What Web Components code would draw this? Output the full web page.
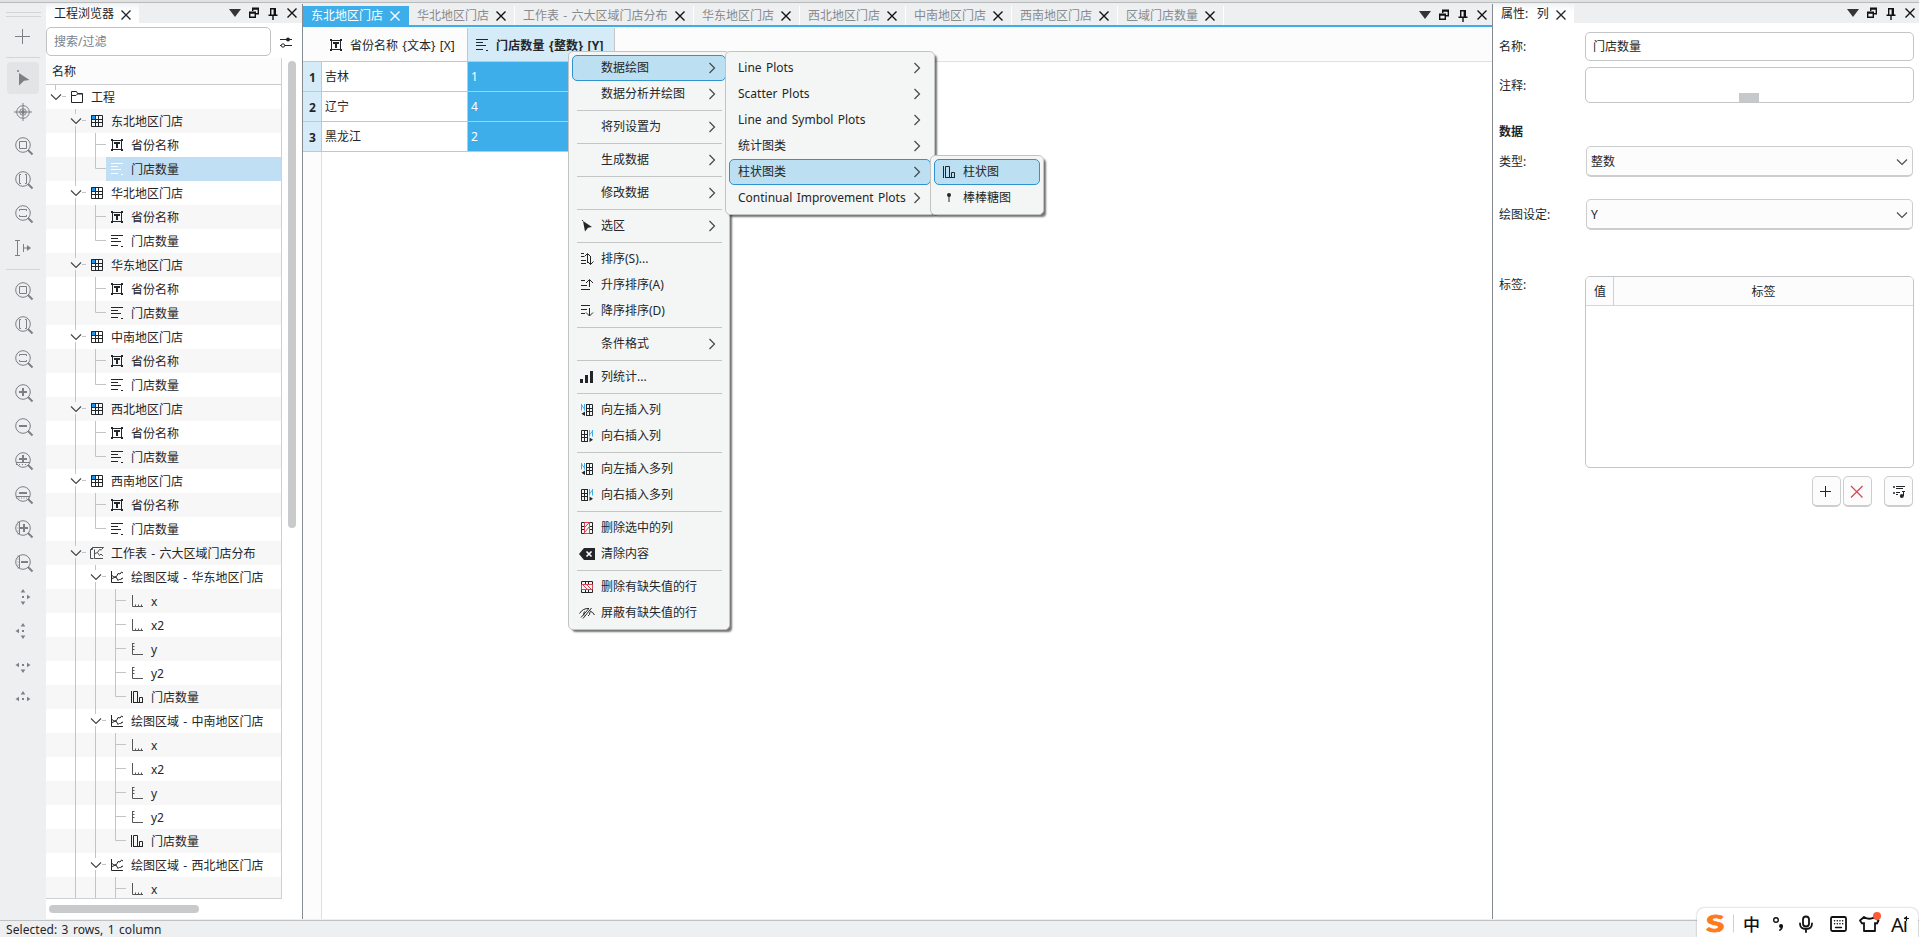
<!DOCTYPE html>
<html lang="zh-CN">
<head>
<meta charset="utf-8">
<title>工程浏览器</title>
<style>
    html, body { margin: 0; height: 100%; overflow: hidden; }
    body {
        --ink: #232629;
        --line: #c4c6c8;
        --chrome: #eeeff1;
        --accent: #3daee9;
        --soft: #d6ebf8;
        font: 12px/16px "Noto Sans", "Noto Sans CJK SC", sans-serif;
        word-spacing: 1.2px;
        color: var(--ink);
        background: #fff;
    }
</style>
</head>
<body>
<main-window></main-window>

<script>
const ICONS = {
    // window controls
    close: '<path d="M3.5 3.5l9 9M12.5 3.5l-9 9" stroke-width="1.4"/>',
    menu: '<path d="M2 4h12l-6 8z" fill="#333537" stroke="none"/>',
    restore: '<path d="M6.7 6V3.7h5.6v5H10M3.7 7.7h5.6v4.6H3.7z" stroke-width="1.4"/><path d="M6 3.6h7M3 7.6h7" stroke-width="2"/>',
    pin: '<path d="M5.7 10V3.7h4.6V10M9.3 4v6M3.5 10.2h9M8 10.5V15" stroke-width="1.4"/>',
    filter: '<path d="M2 5.5h12M2 11.5h12"/><circle cx="10" cy="5.5" r="2" fill="currentColor" stroke="none"/><circle cx="5" cy="11.5" r="1.7" fill="#fff"/>',
    // tree and columns
    folder: '<path d="M2.5 13.5v-11h5l1 2h5v9z"/><path d="M2.5 6.5h4.500l2-2M8.500 5h5"/>',
    sheet: '<path d="M2 2h4.500v4.500H2z" fill="#1d99f3" stroke="none"/><path d="M2.5 2.5h11v11h-11zM6.5 2v12M9.500 2v12M2 6.5h12M2 9.500h12"/>',
    text: '<path d="M3.5 3.5h9v9h-9z"/><path d="M2 2h2v2H2zM12 2h2v2h-2zM2 12h2v2H2zM12 12h2v2h-2z" fill="currentColor" stroke="none"/><path d="M5 6h6M8 6v5" stroke-width="2"/>',
    number: '<path d="M2 2.500h12M2 5.500h7M2 8.500h10M2 12.500h7M12 13.500h2"/>',
    worksheet: '<path d="M1.500 13.500V4.500l2-2h11l-2 2M1.500 13.500h3M5.500 4.500v9H14M6 8.500l2.500-1 2-3 2 .5M8.500 7.500l2 3 1.500-1.500 2 2M3.500 2.500v2h-2" stroke="#4d5053"/>',
    area: '<path d="M2.500 2v11.500H14M3 6.500l2 1.500 2.500-.5L9 4.500l2 .5 1.500-2 1.500 1M7 8l2 3.500 1.500-1.500 1 1 1.500-2 1 .5M3 9.500l4-1.500"/>',
    xaxis: '<path d="M3.500 2v11.500H14M6.500 11.500v2M9.500 11.500v2M12.500 11.500v2" stroke="#55585b"/>',
    yaxis: '<path d="M3.500 2v11.500H14M3.500 2.500h2M3.500 5.500h2M3.500 8.500h2" stroke="#55585b"/>',
    bars: '<path d="M2.500 2v12M4.500 2.500h4v11h-4zM10.500 8.500h3v5h-3zM4 13.500h10"/>',
    // context menu
    cursor: '<path d="M4 3l9 6-4 .7L6 13.500z" fill="currentColor" stroke="none"/><path d="M3 2.500h1"/>',
    lollipop: '<circle cx="8" cy="5" r="2" fill="currentColor" stroke="none"/><path d="M8 5v7"/>',
    sort: '<path d="M2 2.500h3M2 5.500h3M2 9.500h5M2 12.500h5M8.500 12V3M5.500 5.500l3-3 3 3M11.500 5v8.500M8.500 10.500l3 3 3-3"/>',
    sortUp: '<path d="M2 3.500h4M2 8.500h6M2 12.500h9M10.500 10V3M7 6l3.500-3.500L14 6"/>',
    sortDown: '<path d="M2 2.500h9M2 6.500h6M2 10.500h4M10.500 5v8M7 9.500l3.500 3.500L14 9.500"/>',
    stats: '<path d="M2.500 10v4M7.500 6v8M12.500 2v12" stroke-width="3"/>',
    insLeft: '<path d="M7.500 2.500h6v11h-6M7.500 2v12M10.500 2v12M7 6.500h7M7 9.500h7"/><path d="M2.500 2v6.500M5.500 2v6.500M2.500 3l3 4" stroke="#3daee9"/><path d="M6 9.500V14l-3.500-2.200z" fill="currentColor" stroke="none"/>',
    insRight: '<path d="M8.500 2.500h-6v11h6M8.500 2v12M5.500 2v12M2 6.500h7M2 9.500h7"/><path d="M10.500 2v6.500M13.500 2v6.500M10.500 7l3-4" stroke="#3daee9"/><path d="M10.500 9.500V14l3.500-2.200z" fill="currentColor" stroke="none"/>',
    delCol: '<path d="M2.500 2.500h11v11h-11zM2 6.500h3M2 9.500h3M11 6.500h3M11 9.500h3"/><path d="M5.500 2.500h5v11h-5zM6 7l4-4M6 12l4-5" stroke="#da4453"/>',
    delRow: '<path d="M2.500 2.500h11v11h-11zM6.500 2v3M9.500 2v3M6.500 11v3M9.500 11v3"/><path d="M2.500 5.500h11v5h-11zM4 6l4 4M8 6l4 4" stroke="#da4453"/>',
    clear: '<path d="M0 8l5-6h11v12H5z" fill="currentColor" stroke="none"/><path d="M7.500 5.500l5 5M12.500 5.500l-5 5" stroke="#fff" stroke-width="1.600"/>',
    mask: '<path d="M.5 8.500Q4 3 10 3.500M11 6q3 1 4.500 4M4 13.500L12.500 3M2 12.500L9.500 4M5.500 6.500Q4 9 5 10.500M9 11q2-1 2-4"/>',
    // buttons
    plus: '<path d="M7.500 2v11M2 7.500h11" />',
    remove: '<path d="M2 2l11.500 11.500M13.500 2L2 13.500" stroke="#da4453" stroke-width="1.200"/>',
    playlist: '<path d="M5 2.500h9M5 4.500h7M5 8.500h4M5 10.500h2M12.500 7v5M11 7.500h3"/><path d="M2 2h2v2H2zM2 8h2v2H2z" fill="#55585b" stroke="none"/><circle cx="10.800" cy="12" r="2" fill="currentColor" stroke="none"/>',
    down: '<path d="M3 5.500l5 5 5-5" stroke="#4b4e51" stroke-width="1.200"/>'
};

// the toolbar set is drawn on a 22px grid
const LENS = '<circle cx="11" cy="10" r="7.300"/><path d="M16 15l4.500 4.500" stroke-width="2"/>';
const DOT = {
    up: '<path d="M11 3l2.300 3.500H8.700z"/>',
    down: '<path d="M11 19l2.300-3.500H8.700z"/>',
    left: '<path d="M3.500 11L7 8.700v4.600z"/>',
    right: '<path d="M18.500 11L15 8.700v4.600z"/>'
};
const dots = (...dirs) => `<g fill="currentColor" stroke="none">${dirs.map(d => DOT[d]).join("")}<path d="M10 10h2v2h-2z"/></g>`;
const TOOLS = {
    add: '<path d="M10.500 3v15M3 10.500h15"/>',
    pointer: '<path d="M7 6l10.500 7-5.500.8L7 18.500z" fill="currentColor" stroke="none"/><path d="M5 4h2" stroke-width="1.500"/>',
    target: '<circle cx="11" cy="11" r="6.300"/><circle cx="11" cy="11" r="3.300"/><path d="M11 2v18M2 11h18"/><circle cx="11" cy="11" r="1.500" fill="currentColor"/>',
    fit: LENS + '<path d="M7.500 6.500h7v7h-7z"/>',
    fitX: LENS + '<path d="M9 5.500H7.500v9H9M13 5.500h1.500v9H13"/>',
    fitY: LENS + '<path d="M7.500 8V6.500h7V8M7.500 12v1.500h7V12"/>',
    range: '<path d="M3 3.500h5M3 18.500h5M5.500 3.500v15M11.500 7v8M12 11h6"/><path d="M19 11l-4-3v6z" fill="currentColor" stroke="none"/>',
    zoomIn: LENS + '<path d="M11 6v8M7 10h8" stroke-width="2"/>',
    zoomOut: LENS + '<path d="M7 10h8" stroke-width="2"/>',
    zoomInX: LENS + '<path d="M11 5v7M7 9h8" stroke-width="2"/><path d="M4 12.500h14"/><path d="M4 14.500h14" stroke-dasharray="1 2"/>',
    zoomOutX: LENS + '<path d="M7 9h8" stroke-width="2"/><path d="M4 12.500h14"/><path d="M4 14h14" stroke-dasharray="1 1.500"/>',
    zoomInY: LENS + '<path d="M12 6v8M8 10h8" stroke-width="2"/><path d="M7.500 3.500v13"/><path d="M6 3.500v13" stroke-dasharray="1 2"/>',
    zoomOutY: LENS + '<path d="M9 10h7" stroke-width="2"/><path d="M7.500 3.500v13"/><path d="M6 3.500v13" stroke-dasharray="1 2"/>',
    shiftRight: dots("up", "down", "right"),
    shiftLeft: dots("up", "down", "left"),
    shiftDown: dots("left", "right", "down"),
    shiftUp: dots("left", "right", "up")
};

class BaseElement extends HTMLElement {
    constructor() {
        super();
        this.attachShadow({ mode: "open" });
    }

    connectedCallback() {
        const template = document.createElement("template");
        template.innerHTML = `<style>${this.getStyles()}</style>${this.getTemplate()}`;
        this.shadowRoot.replaceChildren(template.content.cloneNode(true));
    }
}

class UiIcon extends BaseElement {
    getTemplate() {
        const name = this.getAttribute("name");
        const size = TOOLS[name] ? 22 : 16;
        return `<svg width="${size}" height="${size}" viewBox="0 0 ${size} ${size}" fill="none" stroke="currentColor">${TOOLS[name] || ICONS[name]}</svg>`;
    }
    getStyles() {
        return `:host { display: block; flex: none; } svg { display: block; }`;
    }
}
customElements.define("ui-icon", UiIcon);

class WindowControls extends BaseElement {
    getTemplate() {
        return ["menu", "restore", "pin", "close"].map(n => `<ui-icon name="${n}"></ui-icon>`).join("");
    }
    getStyles() {
        return `:host { display: flex; gap: 3px; margin-left: auto; color: #111; }`;
    }
}
customElements.define("window-controls", WindowControls);

class DockTitle extends BaseElement {
    getTemplate() {
        return `
            <div class="tab"><span><slot></slot></span><ui-icon name="close"></ui-icon></div>
            <window-controls></window-controls>
        `;
    }
    getStyles() {
        return `
            :host { display: flex; flex: none; height: 19px; background: var(--chrome); padding-right: var(--title-end, 2px); }
            .tab {
                display: flex; align-items: center; gap: 4px; box-sizing: border-box;
                padding: 1px 5px 0 8px;
                background: linear-gradient(#f3f4f5, #fff 8px);
            }
            .tab ui-icon { margin-bottom: -1px; }
            window-controls { margin-top: 1px; }
        `;
    }
}
customElements.define("dock-title", DockTitle);

class ToolStrip extends BaseElement {
    getTemplate() {
        const groups = [
            ["add"],
            ["pointer", "target", "fit", "fitX", "fitY", "range"],
            ["fit", "fitX", "fitY", "zoomIn", "zoomOut", "zoomInX", "zoomOutX", "zoomInY", "zoomOutY",
             "shiftRight", "shiftLeft", "shiftDown", "shiftUp"]
        ];
        return `<div class="grip"></div>` + groups.map(group =>
            `<div class="group">${group.map(n => `<div class="tool ${n}"><ui-icon name="${n}"></ui-icon></div>`).join("")}</div>`
        ).join("<hr>");
    }
    getStyles() {
        return `
            :host { display: flex; flex-direction: column; flex: none; width: 46px; background: var(--chrome); color: #7d8083; }
            .grip { flex: none; height: 3px; margin: 8px 5px 0 6px; border: solid #d3d5d7; border-width: 1px 0; }
            .group { padding: 4px 0 0 7px; }
            .group:last-child { padding-top: 5px; }
            .tool { width: 32px; height: 32px; margin-bottom: 2px; display: grid; place-items: center; border-radius: 4px; }
            .add { margin-bottom: 1px; }
            .pointer { background: #e3e4e6; }
            hr { flex: none; width: 34px; height: 1px; border: 0; margin: 3px 0 0 6px; background: #d3d5d7; }
        `;
    }
}
customElements.define("tool-strip", ToolStrip);

class TreeRow extends BaseElement {
    // one guide cell per level: "." empty, "|" line, "+" tee, "L" end, "v" open node, "V" open root
    guide(kind) {
        const part = {
            ".": "",
            "|": "M9.500 0v24",
            "+": "M9.500 0v24M10 11.500h10",
            "L": "M9.500 0v11.500H20",
            "v": "M9.500 0v5M9.500 17v7M16 11.500h4",
            "V": "M9.500 0v5M16 11.500h4"
        }[kind];
        const arrow = kind.toLowerCase() == "v" ? '<path d="M5 9.500l5 5 5-5" stroke="#45484b" stroke-width="1.200"/>' : "";
        return `<svg width="20" height="24" fill="none" stroke="#c3c4c5"><path d="${part}"/>${arrow}</svg>`;
    }
    getTemplate() {
        return `
            ${[...this.getAttribute("guides")].map(g => this.guide(g)).join("")}
            <div class="cell"><ui-icon name="${this.getAttribute("icon")}"></ui-icon><span><slot></slot></span></div>
        `;
    }
    getStyles() {
        return `
            :host { display: flex; flex: none; height: 24px; white-space: nowrap; }
            :host(:nth-child(even)) { background: #f7f7f7; }
            :host([selected]) .cell { background: #c1dff4; }
            :host([selected]) ui-icon { color: #fff; }
            svg { flex: none; }
            .cell { flex: 1; display: flex; align-items: center; gap: 6px; padding-left: 3px; }
            span { padding-top: 2px; }
        `;
    }
}
customElements.define("tree-row", TreeRow);

class ProjectTree extends BaseElement {
    rows() {
        const out = [["V", "folder", "工程"]];
        ["东北", "华北", "华东", "中南", "西北", "西南"].forEach((area, i) => {
            out.push([".v", "sheet", area + "地区门店"]);
            out.push([".|+", "text", "省份名称"]);
            out.push([".|L", "number", "门店数量", i == 0]);
        });
        out.push([".v", "worksheet", "工作表 - 六大区域门店分布"]);
        ["华东", "中南", "西北"].forEach(area => {
            out.push([".|v", "area", `绘图区域 - ${area}地区门店`]);
            out.push([".||+", "xaxis", "x"], [".||+", "xaxis", "x2"], [".||+", "yaxis", "y"], [".||+", "yaxis", "y2"]);
            out.push([".||L", "bars", "门店数量"]);
        });
        return out.slice(0, 34);
    }
    getTemplate() {
        return `
            <dock-title>工程浏览器</dock-title>
            <div class="search"><div class="field">搜索/过滤</div><ui-icon name="filter"></ui-icon></div>
            <div class="body">
                <div class="view">
                    <div class="head">名称</div>
                    <div class="rows">${this.rows().map(([g, icon, label, sel]) =>
                        `<tree-row guides="${g}" icon="${icon}" ${sel ? "selected" : ""}>${label}</tree-row>`).join("")}</div>
                </div>
                <div class="vbar"></div>
            </div>
            <div class="hbar"></div>
        `;
    }
    getStyles() {
        return `
            :host { display: flex; flex-direction: column; flex: none; width: 256px; background: #fff; }
            .search { display: flex; align-items: center; gap: 7px; padding: 4px 0 2px; }
            .field {
                box-sizing: border-box; width: 225px; height: 29px; padding: 6px 7px;
                border: 1px solid #c0c2c4; border-radius: 5px; color: #75828e;
            }
            .body { display: flex; flex: none; height: 841px; }
            .view { display: flex; flex-direction: column; box-sizing: border-box; width: 236px; border: solid #cfd0d1; border-width: 0 1px 1px 0; }
            .head { flex: none; box-sizing: border-box; height: 27px; padding: 6px 6px 0; background: #fcfcfc; border-bottom: 1px solid #c9cacb; }
            .rows { display: flex; flex-direction: column; flex: 1; overflow: hidden; }
            .vbar { width: 8px; height: 467px; margin: 3px 0 0 6px; border-radius: 4px; background: #c9cacb; }
            .hbar { width: 150px; height: 8px; margin: 6px 0 0 3px; border-radius: 4px; background: #c9cacb; }
        `;
    }
}
customElements.define("project-tree", ProjectTree);

class SheetTabs extends BaseElement {
    getTemplate() {
        const tabs = ["东北地区门店", "华北地区门店", "工作表 - 六大区域门店分布", "华东地区门店",
                      "西北地区门店", "中南地区门店", "西南地区门店", "区域门店数量"];
        return tabs.map((t, i) =>
            `<div class="tab ${i ? "" : "active"}"><span>${t}</span><ui-icon name="close"></ui-icon></div>`
        ).join("") + "<window-controls></window-controls>";
    }
    getStyles() {
        return `
            :host { display: flex; flex: none; height: 19px; padding: 0 2px 0 0; margin-top: 2px; background: var(--chrome); border-bottom: 2px solid var(--accent); }
            .tab {
                display: flex; justify-content: space-between; align-items: center; box-sizing: border-box;
                width: 106px; padding: 1px 5px 0 8px; border-right: 1px solid #fff; color: #878a8d; white-space: nowrap;
            }
            .tab:nth-of-type(3) { width: 179px; }
            .tab ui-icon { color: #111; }
            .active, .active ui-icon { color: #fff; }
            .active { background: var(--accent); border-color: var(--accent); }
            window-controls { margin-top: 1px; }
        `;
    }
}
customElements.define("sheet-tabs", SheetTabs);

class DataSheet extends BaseElement {
    getTemplate() {
        const rows = [["吉林", 1], ["辽宁", 4], ["黑龙江", 2]];
        return `
            <div class="head">
                <div class="first"><ui-icon name="text"></ui-icon><span>省份名称 {文本} [X]</span></div>
                <div class="picked"><ui-icon name="number"></ui-icon><span>门店数量 {整数} [Y]</span></div>
            </div>
            ${rows.map(([name, count], i) => `<div class="row"><b>${i + 1}</b><span>${name}</span><span class="on">${count}</span></div>`).join("")}
            <div class="rest"></div>
        `;
    }
    getStyles() {
        return `
            :host { display: flex; flex-direction: column; flex: 1; background: #fff; }
            .head { display: flex; flex: none; box-sizing: border-box; height: 35px; padding: 1px 0 0; background: #fcfcfc; border-bottom: 1px solid #dfe0e1; }
            .head div { display: flex; align-items: center; gap: 6px; box-sizing: border-box; white-space: nowrap; border-right: 1px solid var(--line); border-bottom: 1px solid var(--line); margin-bottom: -1px; }
            .head span { padding-top: 2px; }
            .head .first { width: 165px; padding-left: 25px; }
            .head .picked { width: 147px; padding-left: 6px; font-weight: bold; letter-spacing: .15px; background: var(--soft); }
            .row { display: flex; height: 30px; }
            .row > * { box-sizing: border-box; padding: 7px 3px 0; border-right: 1px solid var(--line); border-bottom: 1px solid var(--line); }
            .row b { width: 19px; padding: 8px 0 0 6px; background: var(--soft); }
            .row span { width: 146px; }
            .row .on { width: 147px; background: var(--accent); color: #fff; }
            .rest { flex: 1; box-sizing: border-box; width: 19px; background: #fcfcfc; border-right: 1px solid #dfe0e1; }
        `;
    }
}
customElements.define("data-sheet", DataSheet);

class PopupMenu extends BaseElement {
    getTemplate() {
        return `<slot></slot>`;
    }
    getStyles() {
        return `
            :host {
                position: absolute; box-sizing: border-box; padding: 3px;
                background: #f4f6f5; border: 1px solid #c2c4c4; border-radius: 5px;
                box-shadow: 3px 3px 2px -1px rgba(0, 0, 0, .55);
            }
        `;
    }
}
customElements.define("popup-menu", PopupMenu);

class MenuEntry extends BaseElement {
    getTemplate() {
        const icon = this.getAttribute("icon");
        return `
            <div class="icon">${icon ? `<ui-icon name="${icon}"></ui-icon>` : ""}</div>
            <span><slot></slot></span>
            ${this.hasAttribute("more") ? '<svg width="8" height="12" fill="none" stroke="#45484b" stroke-width="1.200"><path d="M1.500 1l5 5-5 5"/></svg>' : ""}
        `;
    }
    getStyles() {
        return `
            :host { display: flex; align-items: center; box-sizing: border-box; height: 26px; padding: 0 9px 0 6px; border: 1px solid transparent; border-radius: 5px; white-space: nowrap; }
            :host([on]) { background: #bcdff2; border-color: #2f93cf; }
            .icon { width: 22px; }
            :host([plain]) .icon { width: 2px; }
            svg { margin-left: auto; }
        `;
    }
}
customElements.define("menu-entry", MenuEntry);

class MenuRule extends BaseElement {
    getTemplate() { return `<hr>`; }
    getStyles() {
        return `
            :host { display: block; padding: 3px 4px 3px 5px; }
            hr { height: 1px; margin: 0; border: 0; background: #c4c6c6; }
        `;
    }
}
customElements.define("menu-rule", MenuRule);

class ColumnProperties extends BaseElement {
    getTemplate() {
        return `
            <dock-title>属性: &nbsp;列</dock-title>
            <div class="form">
                <label>名称:</label><div class="input">门店数量</div>
                <label>注释:</label><div class="input note"><i></i></div>
                <label class="section">数据</label>
                <label>类型:</label><div class="combo">整数<ui-icon name="down"></ui-icon></div>
                <label>绘图设定:</label><div class="combo">Y<ui-icon name="down"></ui-icon></div>
                <label class="top">标签:</label>
                <div class="table"><div class="th"><span>值</span><span>标签</span></div></div>
            </div>
            <div class="buttons">
                <div><ui-icon name="plus"></ui-icon></div>
                <div><ui-icon name="remove"></ui-icon></div>
                <div><ui-icon name="playlist"></ui-icon></div>
            </div>
        `;
    }
    getStyles() {
        return `
            :host { display: flex; flex-direction: column; flex: none; width: 426px; background: #fff; --title-end: 1px; }
            .form {
                display: grid; grid-template-columns: 80px 329px; column-gap: 6px; align-items: center;
                grid-template-rows: 29px 6px 36px 17px 23px 3px 31px 22px 31px 46px 192px;
                padding: 9px 5px 0 6px;
            }
            .form > * { box-sizing: border-box; }
            label:nth-of-type(1), .input { grid-row: 1; }
            label:nth-of-type(2), .note { grid-row: 3; }
            label { padding-top: 1px; }
            .section { grid-row: 5; font-weight: bold; }
            label:nth-of-type(4) { grid-row: 7; }
            label:nth-of-type(5) { grid-row: 9; }
            .combo { grid-row: 7; grid-column: 2; }
            .combo + label + .combo { grid-row: 9; }
            .top { grid-row: 11; align-self: start; }
            .table { grid-row: 11; grid-column: 2; }
            .input { grid-column: 2; height: 100%; padding: 6px 7px; border: 1px solid #c3c5c6; border-radius: 5px; }
            .input.note { grid-row: 3; display: flex; justify-content: center; align-items: flex-end; padding: 0; }
            .note i { width: 20px; height: 9px; margin-right: 1px; background: #c6c8ca; }
            .combo {
                display: flex; align-items: center; justify-content: space-between; height: 100%; margin: 0 1px;
                padding: 1px 2px 0 4px; background: #fcfcfc; border: 1px solid #cbcdce; border-bottom: 2px solid #cbcdce; border-radius: 5px;
            }
            .table { height: 100%; border: 1px solid #c3c5c6; border-radius: 5px; overflow: hidden; }
            .th { display: flex; height: 28px; line-height: 30px; text-align: center; background: #fcfcfc; border-bottom: 1px solid #d5d6d7; }
            .th span:first-child { width: 28px; padding-left: 1px; box-sizing: border-box; border-right: 1px solid #cfd0d1; }
            .th span:last-child { flex: 1; }
            .buttons { display: flex; justify-content: flex-end; gap: 2px; padding: 8px 6px 0 0; }
            .buttons div {
                display: flex; box-sizing: border-box; width: 29px; height: 31px; padding: 7px 0 0 5px;
                background: #fcfcfc; border: 1px solid #cbcdce; border-bottom-width: 2px; border-radius: 5px;
            }
            .buttons div:last-child { margin-left: 10px; padding-left: 6px; }
        `;
    }
}
customElements.define("column-properties", ColumnProperties);

class InputBar extends BaseElement {
    getTemplate() {
        return `
            <svg width="222" height="32" fill="none" stroke="#111" stroke-width="1.800" stroke-linecap="round" stroke-linejoin="round">
                <text x="6" y="24" transform="translate(9 0) scale(1.450 1) translate(-6 0)" font-family="Lato" font-weight="900" font-size="23" fill="#ff7a1a" stroke="#ff7a1a" stroke-width=".8">S</text>
                <path d="M36.500 7v17" stroke="#d0d0d0" stroke-width="1"/>
                <text x="46" y="22.500" font-family="Noto Sans CJK SC" font-size="17" font-weight="500" fill="#111" stroke="none">中</text>
                <circle cx="79" cy="12" r="2.300" stroke-width="1.400"/>
                <circle cx="84" cy="18" r="2" fill="#111" stroke="none"/><path d="M85 18.500q0 2.500-2 3.500"/>
                <rect x="106" y="8.500" width="6" height="10" rx="3"/><path d="M103 15.500q0 5.500 6 5.500t6-5.500M109 21.500v2.500"/>
                <rect x="134" y="9" width="15" height="14" rx="1.500"/><path d="M137.500 12.800h9M137.500 15.800h9" stroke-width="1.500" stroke-dasharray=".1 2.600"/><path d="M138.500 19.500h6" stroke-width="1.400"/>
                <path d="M167 9l-4 3.500 2 3 2-.5v8h11v-8l2 .5 1.500-3L177.500 9q-5 3.500-10.500 0z"/>
                <circle cx="180" cy="8" r="4" fill="#ff5a36" stroke="none"/>
                <text x="194" y="23.500" font-family="Noto Sans" font-size="20" fill="#111" stroke="none" textLength="17">Ai</text>
                <path d="M209.500 8.500v4M207.500 10.500h4" stroke-width="1.200"/>
            </svg>
        `;
    }
    getStyles() {
        return `
            :host { position: absolute; right: 1px; bottom: 0; width: 221px; height: 29px; background: #fff; border-radius: 7px 7px 0 0; box-shadow: 0 0 2px rgba(0, 0, 0, .35); overflow: hidden; }
            svg { display: block; }
        `;
    }
}
customElements.define("input-bar", InputBar);

class MainWindow extends BaseElement {
    getTemplate() {
        return `
            <header></header>
            <section>
                <tool-strip></tool-strip>
                <project-tree></project-tree>
                <div class="center"><sheet-tabs></sheet-tabs><data-sheet></data-sheet></div>
                <column-properties></column-properties>
            </section>
            <footer>Selected: 3 rows, 1 column</footer>

            <popup-menu style="left: 568px; top: 51px; width: 162px">
                <menu-entry more on>数据绘图</menu-entry>
                <menu-entry more>数据分析并绘图</menu-entry>
                <menu-rule></menu-rule>
                <menu-entry more>将列设置为</menu-entry>
                <menu-rule></menu-rule>
                <menu-entry more>生成数据</menu-entry>
                <menu-rule></menu-rule>
                <menu-entry more>修改数据</menu-entry>
                <menu-rule></menu-rule>
                <menu-entry more icon="cursor">选区</menu-entry>
                <menu-rule></menu-rule>
                <menu-entry icon="sort">排序(S)...</menu-entry>
                <menu-entry icon="sortUp">升序排序(A)</menu-entry>
                <menu-entry icon="sortDown">降序排序(D)</menu-entry>
                <menu-rule></menu-rule>
                <menu-entry more>条件格式</menu-entry>
                <menu-rule></menu-rule>
                <menu-entry icon="stats">列统计...</menu-entry>
                <menu-rule></menu-rule>
                <menu-entry icon="insLeft">向左插入列</menu-entry>
                <menu-entry icon="insRight">向右插入列</menu-entry>
                <menu-rule></menu-rule>
                <menu-entry icon="insLeft">向左插入多列</menu-entry>
                <menu-entry icon="insRight">向右插入多列</menu-entry>
                <menu-rule></menu-rule>
                <menu-entry icon="delCol">删除选中的列</menu-entry>
                <menu-entry icon="clear">清除内容</menu-entry>
                <menu-rule></menu-rule>
                <menu-entry icon="delRow">删除有缺失值的行</menu-entry>
                <menu-entry icon="mask">屏蔽有缺失值的行</menu-entry>
            </popup-menu>
            <popup-menu style="left: 725px; top: 51px; width: 210px">
                <menu-entry more plain>Line Plots</menu-entry>
                <menu-entry more plain>Scatter Plots</menu-entry>
                <menu-entry more plain>Line and Symbol Plots</menu-entry>
                <menu-entry more plain>统计图类</menu-entry>
                <menu-entry more plain on>柱状图类</menu-entry>
                <menu-entry more plain>Continual Improvement Plots</menu-entry>
            </popup-menu>
            <popup-menu style="left: 930px; top: 155px; width: 114px">
                <menu-entry on icon="bars">柱状图</menu-entry>
                <menu-entry icon="lollipop">棒棒糖图</menu-entry>
            </popup-menu>
            <input-bar></input-bar>
        `;
    }
    getStyles() {
        return `
            :host { display: flex; flex-direction: column; height: 937px; background: var(--chrome); }
            header { flex: none; height: 2px; background: #e0e1e3; border-bottom: 1px solid #b9babc; margin-bottom: 1px; }
            section { display: flex; flex: none; height: 915px; }
            .center { display: flex; flex-direction: column; flex: 1; border: solid #858b90; border-width: 0 1px; }
            footer { flex: none; margin-top: 1px; padding: 2px 6px 0; line-height: 14px; letter-spacing: .06px; border-top: 1px solid #c0c2c4; }
        `;
    }
}
customElements.define("main-window", MainWindow);
</script>
</body>
</html>
